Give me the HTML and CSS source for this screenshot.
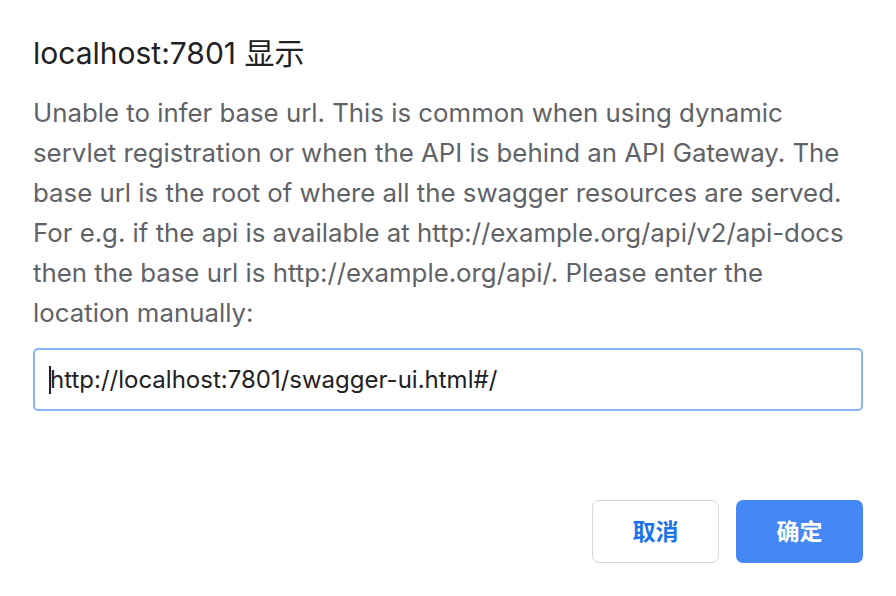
FILE: index.html
```html
<!DOCTYPE html>
<html lang="zh-CN">
<head>
<meta charset="utf-8">
<title>localhost:7801 显示</title>
<link rel="stylesheet" href="styles.css">
</head>
<body>
<div class="dialog">
  <h1 class="title">localhost:7801 显示</h1>
  <p class="message">Unable to infer base url. This is common when using dynamic<br>servlet registration or when the API is behind an API Gateway. The<br>base url is the root of where all the swagger resources are served.<br>For e.g. if the api is available at http://example.org/api/v2/api-docs<br>then the base url is http://example.org/api/. Please enter the<br>location manually:</p>
  <div class="field"><span class="caret"></span><span class="value">http://localhost:7801/swagger-ui.html#/</span></div>
  <div class="actions">
    <button class="btn btn-cancel">取消</button>
    <button class="btn btn-ok">确定</button>
  </div>
</div>
</body>
</html>
```
FILE: styles.css
```css
html, body {
  margin: 0;
  padding: 0;
  background: #ffffff;
}
.dialog {
  width: 896px;
  height: 596px;
  box-sizing: border-box;
  padding: 33px 33px 0 33px;
  font-family: Inter, "Noto Sans CJK SC", sans-serif;
}
.title {
  margin: 0;
  font-size: 30px;
  font-weight: 400;
  line-height: 40px;
  color: #202124;
}
.message {
  margin: 20px 0 0 0;
  font-size: 25.8px;
  line-height: 40px;
  color: #5f6368;
}
.field {
  margin-top: 15px;
  height: 63px;
  box-sizing: border-box;
  border: 2px solid #8ab4f8;
  border-radius: 5px;
  display: flex;
  align-items: center;
  padding-left: 14px;
  font-size: 24px;
  color: #202124;
}
.caret {
  width: 2px;
  height: 28px;
  background: #202124;
  margin-right: -1px;
}
.actions {
  margin-top: 89px;
  display: flex;
  justify-content: flex-end;
  gap: 17px;
}
.btn {
  width: 127px;
  height: 63px;
  border-radius: 7px;
  font-family: "Noto Sans CJK SC", sans-serif;
  font-size: 23px;
  font-weight: 700;
  line-height: 1;
  padding: 0 0 3px 0;
}
.btn-cancel {
  background: #ffffff;
  border: 1px solid #d6d8dc;
  color: #1a73e8;
}
.btn-ok {
  background: #4487f5;
  border: none;
  color: #ffffff;
}
```
